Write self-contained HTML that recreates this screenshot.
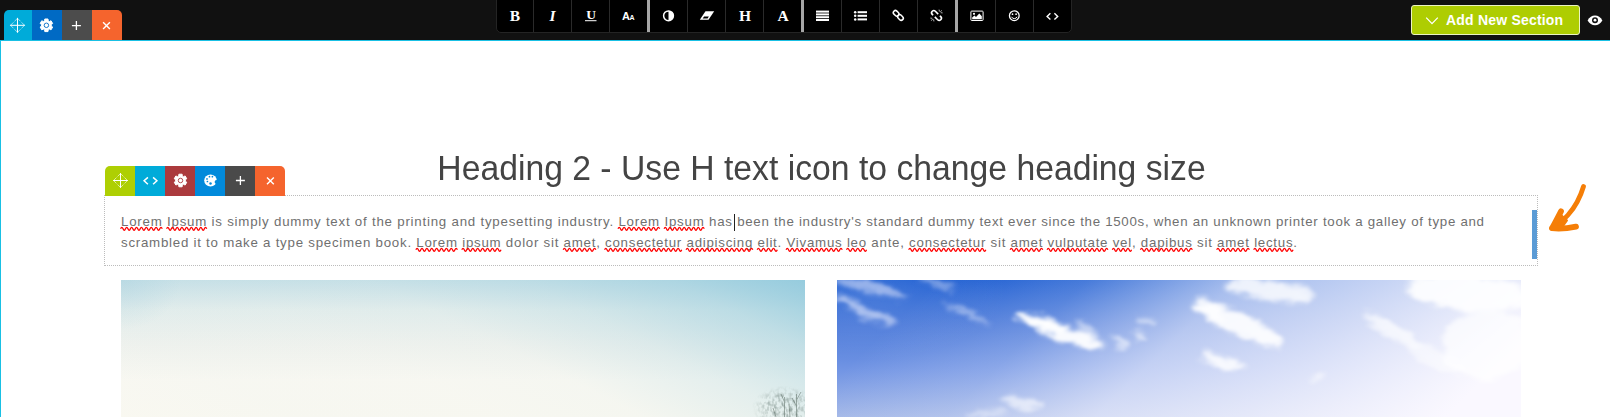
<!DOCTYPE html>
<html lang="en">
<head>
<meta charset="utf-8">
<title>Page Builder</title>
<style>
html,body{margin:0;padding:0;}
body{width:1610px;height:417px;overflow:hidden;background:#fff;position:relative;font-family:"Liberation Sans",sans-serif;}
.abs{position:absolute;}
#topbar{left:0;top:0;width:1610px;height:40px;background:#111;}
#topline{left:0;top:40px;width:1610px;height:1px;background:#19c0e4;}
#leftline{left:0;top:40px;width:1px;height:377px;background:#19c0e4;}
.tabs{display:flex;overflow:hidden;z-index:3;}
.tabs .t{height:30px;width:30px;position:relative;}
.tabs .t svg{position:absolute;left:0;top:0;width:100%;height:100%;}
#sectabs{left:4px;top:10px;height:30px;border-radius:5px 5px 0 0;}
#eltabs{left:105px;top:166px;height:30px;border-radius:5px 5px 0 0;}
#toolbar{left:496px;top:-1px;width:574px;height:32px;background:#000;border-radius:0 0 5px 5px;display:flex;overflow:hidden;border:1px solid #242424;}
#toolbar .b{width:38px;height:33px;box-sizing:border-box;border-right:1px solid #2a2a2a;position:relative;color:#fff;text-align:center;}
#toolbar .b.last{border-right:none;width:auto;flex:1;}
#toolbar .b.sep{border-right:3px solid #a6a6a6;width:40px;}
#toolbar .b svg{position:absolute;left:0;top:0;}
#toolbar .b span{position:absolute;left:0;width:37px;text-align:center;font-family:"Liberation Serif",serif;font-weight:bold;color:#fff;}
#addbtn{left:1411px;top:5px;width:169px;height:30px;box-sizing:border-box;background:#aecd02;border:1px solid #ebf3c2;border-radius:3px;color:#fff;font-weight:bold;font-size:14px;}
#addbtn span{position:absolute;left:34px;top:6px;white-space:nowrap;letter-spacing:0.2px;}
#heading{left:105px;top:146.8px;width:1433px;text-align:center;font-size:35.7px;line-height:42px;color:#444;white-space:nowrap;transform:scaleX(0.9447);transform-origin:50% 50%;}
#box{left:104px;top:195px;width:1434px;height:71px;box-sizing:border-box;border:1px dotted #bcbcbc;}
#para{left:121px;top:211px;font-size:13.3px;line-height:21px;color:#707070;white-space:nowrap;letter-spacing:0.44px;}
#para u{text-decoration:none;}
#caret{left:734px;top:214px;width:1px;height:17px;background:#222;}
#bluebar{left:1532px;top:210px;width:5px;height:49px;background:#5b9bd5;}
#img1{left:121px;top:280px;width:684px;height:137px;overflow:hidden;background:radial-gradient(ellipse 60px 50px at 0 0,rgba(160,205,222,0.35),rgba(160,205,222,0) 100%),linear-gradient(26.565deg,rgba(139,199,220,0.02) 0px,rgba(139,199,220,0.04) 78px,rgba(139,199,220,0.035) 167px,rgba(139,199,220,0.055) 234px,rgba(139,199,220,0.207) 301.5px,rgba(139,199,220,0.455) 368.6px,rgba(139,199,220,0.863) 435.6px),linear-gradient(180deg,rgb(201,225,231) 0px,rgb(229,238,236) 30px,rgb(242,243,238) 65px,rgb(251,249,242) 100px,rgb(251,249,241) 137px);}
#img2{left:837px;top:280px;width:684px;height:137px;overflow:hidden;background:radial-gradient(ellipse 140px 70px at 30px 10px,rgba(255,255,255,0.13),rgba(255,255,255,0) 100%),linear-gradient(136.05deg,rgba(250,248,255,0) 69.4px,rgba(250,248,255,0.195) 173.5px,rgba(250,248,255,0.611) 277.6px,rgba(250,248,255,0.764) 381.7px,rgba(250,248,255,1) 520.5px),linear-gradient(180deg,rgb(27,92,209) 0px,rgb(73,120,217) 45px,rgb(114,149,228) 90px,rgb(161,182,231) 137px);}
</style>
</head>
<body>
<div id="topbar" class="abs"></div>
<div id="topline" class="abs"></div>
<div id="leftline" class="abs"></div>

<div id="sectabs" class="abs tabs">
  <div class="t" style="background:#00abd9;width:28px"><svg viewBox="0 0 28 30"><g transform="translate(13.5,15.3)" fill="none" stroke="#fff" stroke-width="1" stroke-linecap="round" stroke-linejoin="round"><path d="M-7 0H7M0 -7V7"/><path d="M-4.3 -2.7L-7 0L-4.3 2.7M4.3 -2.7L7 0L4.3 2.7M-2.7 -4.3L0 -7L2.7 -4.3M-2.7 4.3L0 7L2.7 4.3" stroke-width="0.8" opacity="0.75"/></g></svg></div>
  <div class="t" style="background:#006ac4"><svg viewBox="0 0 30 30"><g transform="translate(14.4,15.3)"><path d="M1.76 -4.57L1.63 -6.29L-1.63 -6.29L-1.76 -4.57L-3.08 -3.81L-4.64 -4.56L-6.26 -1.74L-4.84 -0.77L-4.84 0.77L-6.26 1.74L-4.64 4.56L-3.08 3.81L-1.76 4.57L-1.63 6.29L1.63 6.29L1.76 4.57L3.08 3.81L4.64 4.56L6.26 1.74L4.84 0.77L4.84 -0.77L6.26 -1.74L4.64 -4.56L3.08 -3.81Z" fill="#fff" stroke="#fff" stroke-width="1" stroke-linejoin="round"/><circle r="2.25" fill="none" stroke="#006ac4" stroke-width="0.9"/></g></svg></div>
  <div class="t" style="background:#4c4c4c"><svg viewBox="0 0 30 30"><path transform="translate(14.4,15.6)" d="M-4.5 0H4.5M0 -4.5V4.5" fill="none" stroke="#fff" stroke-width="1.3"/></svg></div>
  <div class="t" style="background:#f5642d"><svg viewBox="0 0 30 30"><path transform="translate(14.5,15.6)" d="M-3.4 -3.4L3.4 3.4M3.4 -3.4L-3.4 3.4" fill="none" stroke="#fff" stroke-width="1.4"/></svg></div>
</div>

<div id="toolbar" class="abs">
  <div class="b" style="width:37px"></div><div class="b"></div><div class="b"></div><div class="b sep"></div>
  <div class="b"></div><div class="b"></div><div class="b"></div><div class="b sep"></div>
  <div class="b"></div><div class="b"></div><div class="b"></div><div class="b sep"></div>
  <div class="b"></div><div class="b"></div><div class="b last"></div>
</div>
<svg id="tbicons" class="abs" style="left:496px;top:0" width="576" height="33" viewBox="496 0 576 33">
  <g fill="#fff" font-family="Liberation Serif, serif" font-weight="bold" text-anchor="middle">
    <text x="515" y="20.5" font-size="15.5">B</text>
    <text x="552.5" y="20.5" font-size="15.5" font-style="italic">I</text>
    <text x="591" y="19.2" font-size="13.5">U</text>
    <rect x="585" y="20.2" width="11.5" height="1"/>
    <text x="745" y="20.5" font-size="15.5">H</text>
    <text x="783" y="20.5" font-size="15.5">A</text>
  </g>
  <g fill="#fff" font-family="Liberation Sans, sans-serif" font-weight="bold">
    <text x="622" y="20" font-size="11">A</text>
    <text x="629.6" y="20" font-size="7">A</text>
  </g>
  <!-- adjust -->
  <g transform="translate(668.5,15.8)"><circle r="4.9" fill="none" stroke="#fff" stroke-width="1.5"/><path d="M0 -5V5A5 5 0 0 0 0 -5Z" fill="#fff"/></g>
  <!-- eraser -->
  <g transform="translate(707,15.5)"><path d="M-1.5 -4.3H7.2L1.5 4.3H-7.2Z" fill="#fff"/><path d="M-2.9 0.9H1.9L0.6 3H-4.4Z" fill="#000"/></g>
  <!-- justify -->
  <g fill="#fff"><rect x="816" y="10.6" width="13" height="2"/><rect x="816" y="13.4" width="13" height="2"/><rect x="816" y="16.2" width="13" height="2"/><rect x="816" y="19" width="13" height="2"/></g>
  <!-- list -->
  <g fill="#fff"><rect x="857.6" y="11.2" width="9.4" height="2"/><rect x="857.6" y="14.8" width="9.4" height="2"/><rect x="857.6" y="18.4" width="9.4" height="2"/><circle cx="855.2" cy="12.2" r="1.25"/><circle cx="855.2" cy="15.8" r="1.25"/><circle cx="855.2" cy="19.4" r="1.25"/></g>
  <!-- link -->
  <g transform="translate(898.3,15.4) rotate(44)" fill="none" stroke="#fff" stroke-width="1.5"><rect x="-6.1" y="-2.1" width="6.2" height="4.2" rx="2.1"/><rect x="-0.1" y="-2.1" width="6.2" height="4.2" rx="2.1"/></g>
  <!-- unlink -->
  <g transform="translate(936.5,15.5)"><g transform="rotate(45)" fill="none" stroke="#fff" stroke-width="1.6"><path d="M0.2 -2.2H-3.8A2.2 2.2 0 0 0 -3.8 2.2H-2.6M-0.2 2.2H3.8A2.2 2.2 0 0 0 3.8 -2.2H2.6"/></g><path d="M2.6 -5.9L2.9 -3.9M5.2 -5.2L3.9 -3.6M6.1 -2.6L4.2 -2.8M-2.6 5.9L-2.9 3.9M-5.2 5.2L-3.9 3.6M-6.1 2.6L-4.2 2.8" stroke="#ddd" stroke-width="0.8" fill="none"/></g>
  <!-- image -->
  <g><rect x="970.9" y="11.1" width="12.2" height="9.4" rx="0.8" fill="none" stroke="#fff" stroke-width="1"/><circle cx="974" cy="13.8" r="1.1" fill="#fff"/><path d="M972.2 19.2V17.6L974.4 15.6L976 17L979.3 13.6L981.8 16.2V19.2Z" fill="#fff"/></g>
  <!-- smile -->
  <g transform="translate(1014.3,15.7)"><circle r="4.85" fill="none" stroke="#fff" stroke-width="1.3"/><circle cx="-1.8" cy="-1.5" r="0.85" fill="#fff"/><circle cx="1.8" cy="-1.5" r="0.85" fill="#fff"/><path d="M-2.7 1.1A2.9 2.9 0 0 0 2.7 1.1" fill="none" stroke="#fff" stroke-width="1"/></g>
  <!-- code -->
  <path transform="translate(1052.4,16.4)" d="M-2 -3.1L-5.3 0L-2 3.1M2 -3.1L5.3 0L2 3.1" fill="none" stroke="#fff" stroke-width="1.4"/>
</svg>

<div id="addbtn" class="abs"><svg class="abs" style="left:12px;top:10px" width="16" height="10" viewBox="0 0 16 10"><path d="M2.2 1.6L8 7.6L13.8 1.6" fill="none" stroke="#fff" stroke-width="1.3"/></svg><span>Add New Section</span></div>
<svg id="eye" class="abs" style="left:1586px;top:13px" width="18" height="14" viewBox="0 0 18 14"><path d="M1.6 7.4C3.4 4.2 6 2.6 9 2.6C12 2.6 14.6 4.2 16.4 7.4C14.6 10.6 12 12.2 9 12.2C6 12.2 3.4 10.6 1.6 7.4Z" fill="#fff"/><circle cx="9" cy="7.2" r="3" fill="#111"/><circle cx="9" cy="7.2" r="1.4" fill="#fff"/></svg>

<div id="heading" class="abs">Heading 2 - Use H text icon to change heading size</div>

<div id="eltabs" class="abs tabs">
  <div class="t" style="background:#aecf03"><svg viewBox="0 0 30 30"><g transform="translate(15.5,14.5)" fill="none" stroke="#fff" stroke-width="1" stroke-linecap="round" stroke-linejoin="round"><path d="M-7 0H7M0 -7V7"/><path d="M-4.3 -2.7L-7 0L-4.3 2.7M4.3 -2.7L7 0L4.3 2.7M-2.7 -4.3L0 -7L2.7 -4.3M-2.7 4.3L0 7L2.7 4.3" stroke-width="0.8" opacity="0.75"/></g></svg></div>
  <div class="t" style="background:#00abd9"><svg viewBox="0 0 30 30"><path transform="translate(15.5,14.8)" d="M-2.6 -3.4L-6.4 0L-2.6 3.4M2.6 -3.4L6.4 0L2.6 3.4" fill="none" stroke="#fff" stroke-width="1.5"/></svg></div>
  <div class="t" style="background:#ab3a3d"><svg viewBox="0 0 30 30"><g transform="translate(15.5,14.5)"><path d="M1.76 -4.57L1.63 -6.29L-1.63 -6.29L-1.76 -4.57L-3.08 -3.81L-4.64 -4.56L-6.26 -1.74L-4.84 -0.77L-4.84 0.77L-6.26 1.74L-4.64 4.56L-3.08 3.81L-1.76 4.57L-1.63 6.29L1.63 6.29L1.76 4.57L3.08 3.81L4.64 4.56L6.26 1.74L4.84 0.77L4.84 -0.77L6.26 -1.74L4.64 -4.56L3.08 -3.81Z" fill="#fff" stroke="#fff" stroke-width="1" stroke-linejoin="round"/><circle r="2.25" fill="none" stroke="#ab3a3d" stroke-width="0.9"/></g></svg></div>
  <div class="t" style="background:#028adb"><svg viewBox="0 0 30 30"><g transform="translate(15.5,14.5)"><ellipse rx="6.3" ry="5.9" fill="#fff"/><circle cx="6.1" cy="1.5" r="2" fill="#028adb"/><circle cx="-3.5" cy="-1.6" r="0.85" fill="#028adb"/><circle cx="-3.1" cy="1" r="0.85" fill="#028adb"/><circle cx="-1" cy="-3.8" r="0.85" fill="#028adb"/><circle cx="1.9" cy="-3.8" r="0.85" fill="#028adb"/><circle cx="0" cy="2.9" r="1.25" fill="#028adb"/></g></svg></div>
  <div class="t" style="background:#4a4a4a"><svg viewBox="0 0 30 30"><path transform="translate(15.4,14.5)" d="M-4.5 0H4.5M0 -4.5V4.5" fill="none" stroke="#fff" stroke-width="1.3"/></svg></div>
  <div class="t" style="background:#f5642d"><svg viewBox="0 0 30 30"><path transform="translate(15.4,14.8)" d="M-3.4 -3.4L3.4 3.4M3.4 -3.4L-3.4 3.4" fill="none" stroke="#fff" stroke-width="1.4"/></svg></div>
</div>

<div id="box" class="abs"></div>
<div id="para" class="abs"><span id="l1"><span id="l1a" style="letter-spacing:0.7721px"><u>Lorem</u> <u>Ipsum</u> is simply dummy text of the printing and typesetting industry. <u>Lorem</u> <u>Ipsum</u> has</span><span id="l1b" style="letter-spacing:0.705px"> been the industry's standard dummy text ever since the 1500s, when an unknown printer took a galley of type and</span></span><br><span id="l2" style="letter-spacing:0.7485px">scrambled it to make a type specimen book. <u>Lorem</u> <u>ipsum</u> dolor sit <u>amet</u>, <u>consectetur</u> <u>adipiscing</u> <u>elit</u>. <u>Vivamus</u> <u>leo</u> ante, <u>consectetur</u> sit <u>amet</u> <u>vulputate</u> <u>vel</u>, <u>dapibus</u> sit <u>amet</u> <u>lectus</u>.</span></div>
<svg id="squig" class="abs" style="left:0;top:200px" width="1610" height="70" viewBox="0 200 1610 70"><path fill="none" stroke="#f00" stroke-width="1.3" d="M120.6 228.8q1.22 -3 2.45 0t2.45 0t2.45 0t2.45 0t2.45 0t2.45 0t2.45 0t2.45 0t2.45 0t2.45 0t2.45 0t2.45 0t2.45 0t2.45 0t2.45 0t2.45 0t2.45 0 M166.6 228.8q1.18 -3 2.36 0t2.36 0t2.36 0t2.36 0t2.36 0t2.36 0t2.36 0t2.36 0t2.36 0t2.36 0t2.36 0t2.36 0t2.36 0t2.36 0t2.36 0t2.36 0t2.36 0 M618.0 228.8q1.22 -3 2.45 0t2.45 0t2.45 0t2.45 0t2.45 0t2.45 0t2.45 0t2.45 0t2.45 0t2.45 0t2.45 0t2.45 0t2.45 0t2.45 0t2.45 0t2.45 0t2.45 0 M664.1 228.8q1.18 -3 2.36 0t2.36 0t2.36 0t2.36 0t2.36 0t2.36 0t2.36 0t2.36 0t2.36 0t2.36 0t2.36 0t2.36 0t2.36 0t2.36 0t2.36 0t2.36 0t2.36 0 M415.9 249.8q1.22 -3 2.44 0t2.44 0t2.44 0t2.44 0t2.44 0t2.44 0t2.44 0t2.44 0t2.44 0t2.44 0t2.44 0t2.44 0t2.44 0t2.44 0t2.44 0t2.44 0t2.44 0 M461.8 249.8q1.23 -3 2.45 0t2.45 0t2.45 0t2.45 0t2.45 0t2.45 0t2.45 0t2.45 0t2.45 0t2.45 0t2.45 0t2.45 0t2.45 0t2.45 0t2.45 0t2.45 0 M563.2 249.8q1.25 -3 2.51 0t2.51 0t2.51 0t2.51 0t2.51 0t2.51 0t2.51 0t2.51 0t2.51 0t2.51 0t2.51 0t2.51 0t2.51 0 M604.6 249.8q1.20 -3 2.41 0t2.41 0t2.41 0t2.41 0t2.41 0t2.41 0t2.41 0t2.41 0t2.41 0t2.41 0t2.41 0t2.41 0t2.41 0t2.41 0t2.41 0t2.41 0t2.41 0t2.41 0t2.41 0t2.41 0t2.41 0t2.41 0t2.41 0t2.41 0t2.41 0t2.41 0t2.41 0t2.41 0t2.41 0t2.41 0t2.41 0t2.41 0 M686.1 249.8q1.23 -3 2.47 0t2.47 0t2.47 0t2.47 0t2.47 0t2.47 0t2.47 0t2.47 0t2.47 0t2.47 0t2.47 0t2.47 0t2.47 0t2.47 0t2.47 0t2.47 0t2.47 0t2.47 0t2.47 0t2.47 0t2.47 0t2.47 0t2.47 0t2.47 0t2.47 0t2.47 0t2.47 0 M757.2 249.8q1.25 -3 2.51 0t2.51 0t2.51 0t2.51 0t2.51 0t2.51 0t2.51 0t2.51 0 M786.1 249.8q1.22 -3 2.44 0t2.44 0t2.44 0t2.44 0t2.44 0t2.44 0t2.44 0t2.44 0t2.44 0t2.44 0t2.44 0t2.44 0t2.44 0t2.44 0t2.44 0t2.44 0t2.44 0t2.44 0t2.44 0t2.44 0t2.44 0t2.44 0t2.44 0 M846.5 249.8q1.25 -3 2.51 0t2.51 0t2.51 0t2.51 0t2.51 0t2.51 0t2.51 0t2.51 0 M908.7 249.8q1.20 -3 2.41 0t2.41 0t2.41 0t2.41 0t2.41 0t2.41 0t2.41 0t2.41 0t2.41 0t2.41 0t2.41 0t2.41 0t2.41 0t2.41 0t2.41 0t2.41 0t2.41 0t2.41 0t2.41 0t2.41 0t2.41 0t2.41 0t2.41 0t2.41 0t2.41 0t2.41 0t2.41 0t2.41 0t2.41 0t2.41 0t2.41 0t2.41 0 M1010.1 249.8q1.25 -3 2.51 0t2.51 0t2.51 0t2.51 0t2.51 0t2.51 0t2.51 0t2.51 0t2.51 0t2.51 0t2.51 0t2.51 0t2.51 0 M1047.1 249.8q1.22 -3 2.43 0t2.43 0t2.43 0t2.43 0t2.43 0t2.43 0t2.43 0t2.43 0t2.43 0t2.43 0t2.43 0t2.43 0t2.43 0t2.43 0t2.43 0t2.43 0t2.43 0t2.43 0t2.43 0t2.43 0t2.43 0t2.43 0t2.43 0t2.43 0t2.43 0 M1112.3 249.8q1.21 -3 2.41 0t2.41 0t2.41 0t2.41 0t2.41 0t2.41 0t2.41 0t2.41 0 M1140.4 249.8q1.24 -3 2.47 0t2.47 0t2.47 0t2.47 0t2.47 0t2.47 0t2.47 0t2.47 0t2.47 0t2.47 0t2.47 0t2.47 0t2.47 0t2.47 0t2.47 0t2.47 0t2.47 0t2.47 0t2.47 0t2.47 0t2.47 0 M1216.7 249.8q1.25 -3 2.51 0t2.51 0t2.51 0t2.51 0t2.51 0t2.51 0t2.51 0t2.51 0t2.51 0t2.51 0t2.51 0t2.51 0t2.51 0 M1253.7 249.8q1.23 -3 2.46 0t2.46 0t2.46 0t2.46 0t2.46 0t2.46 0t2.46 0t2.46 0t2.46 0t2.46 0t2.46 0t2.46 0t2.46 0t2.46 0t2.46 0t2.46 0"/></svg>
<div id="caret" class="abs"></div>
<div id="bluebar" class="abs"></div>

<svg id="arrow" class="abs" style="left:1540px;top:176px" width="60" height="64" viewBox="1540 176 60 64"><g fill="none" stroke="#f57e07" stroke-linecap="round" stroke-linejoin="round"><path d="M1583.5 186.5C1581 195 1576 206 1568 215C1563 220.5 1557 225.5 1552 228" stroke-width="4.8"/><path d="M1552.5 228.5L1560.5 214.5L1567 220.5L1562 227.5Z" fill="#f57e07" stroke-width="2"/><path d="M1561 211.3C1558 217 1555 223 1552 228.2C1559 229 1568 228.3 1576 226.6" stroke-width="5.8"/></g></svg>
<div id="img1" class="abs"><svg class="abs" style="left:0;top:0" width="684" height="137" viewBox="0 0 684 137"><defs><radialGradient id="tg" cx="0.62" cy="0.75" r="0.6"><stop offset="0" stop-color="#fff" stop-opacity="1"/><stop offset="0.55" stop-color="#fff" stop-opacity="0.75"/><stop offset="1" stop-color="#fff" stop-opacity="0"/></radialGradient><filter id="tn" x="0" y="0" width="100%" height="100%"><feTurbulence type="fractalNoise" baseFrequency="0.32 0.22" numOctaves="2" seed="7" result="n"/><feColorMatrix in="n" type="matrix" values="0 0 0 0 0.30  0 0 0 0 0.38  0 0 0 0 0.36  2.6 0 0 0 -1.05" result="c"/><feComposite in="c" in2="SourceGraphic" operator="in"/><feGaussianBlur stdDeviation="0.45"/></filter><filter id="tb"><feGaussianBlur stdDeviation="0.6"/></filter></defs><rect x="630" y="100" width="54" height="37" fill="url(#tg)" filter="url(#tn)"/><g filter="url(#tb)" stroke="#56685f" stroke-width="1" fill="none" opacity="0.5"><path d="M663.5 137V117M675.5 137V114M669 137L668 124M655 137L652 128M663.5 122L660 114M675.5 120L680 112M675.5 126L671 118"/></g></svg></div>
<div id="img2" class="abs"><svg class="abs" style="left:0;top:0" width="684" height="137" viewBox="0 0 684 137"><filter id="cb" x="-20%" y="-50%" width="140%" height="200%"><feGaussianBlur stdDeviation="2.2" result="b"/><feTurbulence type="fractalNoise" baseFrequency="0.05 0.09" numOctaves="3" seed="4" result="n"/><feDisplacementMap in="b" in2="n" scale="14" xChannelSelector="R" yChannelSelector="G" result="d"/><feGaussianBlur in="d" stdDeviation="1.6"/></filter><g filter="url(#cb)"><ellipse cx="35" cy="8" rx="40" ry="4.5" transform="rotate(14 35 8)" fill="#dfe5fa" opacity="0.6"/><ellipse cx="28" cy="31" rx="34" ry="5.5" transform="rotate(24 28 31)" fill="#dfe5fa" opacity="0.65"/><ellipse cx="100" cy="4" rx="19" ry="3" transform="rotate(14 100 4)" fill="#dfe5fa" opacity="0.5"/><ellipse cx="131" cy="34" rx="26" ry="3" transform="rotate(22 131 34)" fill="#dfe5fa" opacity="0.55"/><ellipse cx="222" cy="51" rx="48" ry="8" transform="rotate(21 222 51)" fill="#fff" opacity="0.95"/><ellipse cx="204" cy="42" rx="22" ry="6" transform="rotate(20 204 42)" fill="#fff" opacity="0.8"/><ellipse cx="252" cy="52" rx="16" ry="5" transform="rotate(40 252 52)" fill="#fff" opacity="0.5"/><ellipse cx="282" cy="62" rx="10" ry="4.5" transform="rotate(30 282 62)" fill="#fff" opacity="0.55"/><ellipse cx="309" cy="41" rx="11" ry="4.5" transform="rotate(20 309 41)" fill="#fff" opacity="0.45"/><ellipse cx="302" cy="57" rx="5" ry="4" transform="rotate(0 302 57)" fill="#fff" opacity="0.6"/><ellipse cx="185" cy="122" rx="22" ry="5.5" transform="rotate(10 185 122)" fill="#fff" opacity="0.6"/><ellipse cx="150" cy="134" rx="20" ry="4" transform="rotate(0 150 134)" fill="#fff" opacity="0.4"/><ellipse cx="402" cy="44" rx="50" ry="11" transform="rotate(24 402 44)" fill="#fff" opacity="0.9"/><ellipse cx="372" cy="30" rx="16" ry="7" transform="rotate(30 372 30)" fill="#fff" opacity="0.6"/><ellipse cx="432" cy="10" rx="45" ry="10" transform="rotate(8 432 10)" fill="#fff" opacity="0.8"/><ellipse cx="386" cy="82" rx="24" ry="5.5" transform="rotate(14 386 82)" fill="#fff" opacity="0.85"/><ellipse cx="480" cy="98" rx="7" ry="4" transform="rotate(0 480 98)" fill="#fff" opacity="0.5"/><ellipse cx="555" cy="50" rx="34" ry="5.5" transform="rotate(30 555 50)" fill="#fff" opacity="0.7"/><ellipse cx="630" cy="12" rx="62" ry="18" transform="rotate(6 630 12)" fill="#fff" opacity="0.9"/><ellipse cx="650" cy="65" rx="45" ry="35" transform="rotate(0 650 65)" fill="#fff" opacity="0.7"/><ellipse cx="600" cy="80" rx="30" ry="10" transform="rotate(25 600 80)" fill="#fff" opacity="0.5"/></g></svg></div>
</body>
</html>
